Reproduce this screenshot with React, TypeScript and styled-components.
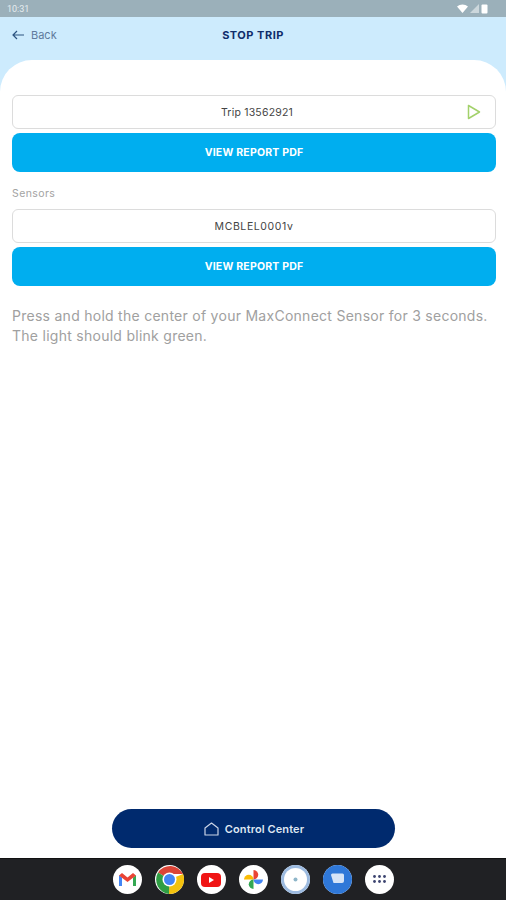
import React from "react";
import styled, { createGlobalStyle } from "styled-components";

const GlobalStyle = createGlobalStyle`
  html, body {
    margin: 0;
    padding: 0;
    background: #cdebfd;
    font-family: "Inter", "Liberation Sans", sans-serif;
  }
  * {
    box-sizing: border-box;
  }
`;

const Screen = styled.div`
  width: 506px;
  height: 900px;
  display: flex;
  flex-direction: column;
  overflow: hidden;
  background: #cdebfd;
`;

const StatusBar = styled.div`
  height: 17px;
  flex-shrink: 0;
  background: #9bb0ba;
  display: flex;
  align-items: center;
  justify-content: space-between;
  padding: 0 18px 0 7px;
  color: #e6edf0;
  font-size: 9px;
  font-family: "Roboto", sans-serif;
`;

const StatusIcons = styled.div`
  display: flex;
  align-items: center;
  gap: 2px;
`;

const Header = styled.header`
  height: 43px;
  flex-shrink: 0;
  display: grid;
  grid-template-columns: 1fr auto 1fr;
  align-items: center;
  padding: 0 12px 8px;
`;

const BackLink = styled.div`
  display: flex;
  align-items: center;
  gap: 7px;
  color: #5f7a9c;
  font-size: 11px;
`;

const Title = styled.h1`
  margin: 0;
  font-size: 11px;
  font-weight: 700;
  letter-spacing: 0.5px;
  color: #0f2d6b;
`;

const Sheet = styled.main`
  flex: 1;
  min-height: 0;
  background: #ffffff;
  border-radius: 32px 32px 0 0;
  padding: 35px 10px 10px 12px;
  display: flex;
  flex-direction: column;
`;

const Field = styled.div<{ $shift?: number; $tracking?: number }>`
  position: relative;
  height: 34px;
  display: flex;
  align-items: center;
  justify-content: center;
  padding-left: ${(p) => p.$shift ?? 0}px;
  border: 1px solid #dcdcdc;
  border-radius: 6px;
  color: #444444;
  font-size: 10.5px;
  letter-spacing: ${(p) => p.$tracking ?? 0.2}px;
`;

const PlayIcon = styled.svg`
  position: absolute;
  right: 14px;
  top: 8px;
`;

const ReportButton = styled.button`
  height: 39px;
  margin-top: 4px;
  border: none;
  border-radius: 8px;
  background: #00aeef;
  color: #ffffff;
  font-family: inherit;
  font-size: 10.5px;
  font-weight: 700;
  letter-spacing: 0.2px;
`;

const SectionLabel = styled.div`
  margin: 15px 0 9px;
  height: 13px;
  line-height: 13px;
  color: #a3a3a3;
  font-size: 10.5px;
  letter-spacing: 0.4px;
`;

const Hint = styled.p`
  margin: 20px 0 0;
  color: #a0a0a0;
  font-size: 14px;
  line-height: 20px;
  letter-spacing: 0.27px;
  white-space: nowrap;
`;

const Spacer = styled.div`
  flex: 1;
`;

const ControlCenter = styled.button`
  align-self: center;
  width: 283px;
  height: 39px;
  margin-right: 2px;
  border: none;
  border-radius: 20px;
  background: #002a6e;
  color: #dfe6f2;
  font-family: inherit;
  font-size: 11px;
  font-weight: 600;
  letter-spacing: 0.1px;
  display: flex;
  align-items: center;
  justify-content: center;
  gap: 6px;
  padding-right: 4px;
`;

const Dock = styled.nav`
  height: 42px;
  flex-shrink: 0;
  background: #202124;
  border-top: 1px solid #111111;
  display: flex;
  align-items: center;
  justify-content: center;
  gap: 13px;
`;

const DockIcon = styled.div<{ $bg?: string }>`
  width: 29px;
  height: 29px;
  border-radius: 50%;
  background: ${(p) => p.$bg ?? "#ffffff"};
  display: flex;
  align-items: center;
  justify-content: center;
`;

const Gmail = () => (
  <svg width="19" height="15" viewBox="0 0 19 15">
    <path d="M1 14V3l3 2.500V14z" fill="#4285f4" />
    <path d="M15 14V5.500L18 3v11z" fill="#34a853" />
    <path d="M1 3.500 4 1l5.500 4.500L15 1l3 2.500-8.500 6.500z" fill="#ea4335" />
  </svg>
);

const Chrome = () => (
  <svg width="29" height="29" viewBox="0 0 29 29">
    <path d="M14.500 14.500 3 7.500A14.500 14.500 0 0 1 28 9H14.500z" fill="#db4437" />
    <path d="M14.500 14.500 28 9a14.500 14.500 0 0 1-14 20z" fill="#f4c20d" />
    <path d="M14.500 14.500 14 29A14.500 14.500 0 0 1 3 7.500z" fill="#2f9e44" />
    <circle cx="14.500" cy="14.500" r="7" fill="#ffffff" />
    <circle cx="14.500" cy="14.500" r="5.500" fill="#4285f4" />
  </svg>
);

const YouTube = () => (
  <svg width="20" height="14" viewBox="0 0 20 14">
    <rect width="20" height="14" rx="4" fill="#f01414" />
    <path d="M8 4v6l5-3z" fill="#ffffff" />
  </svg>
);

// Pinwheel: each petal is a half disc around the centre
const Photos = () => (
  <svg width="21" height="21" viewBox="0 0 21 21">
    <path d="M10.500 10.500H1a4.750 4.750 0 0 1 9.500 0z" fill="#fbbc04" />
    <path d="M10.500 10.500V1a4.750 4.750 0 0 1 0 9.500z" fill="#ea4335" />
    <path d="M10.500 10.500H20a4.750 4.750 0 0 1-9.500 0z" fill="#4285f4" />
    <path d="M10.500 10.500V20a4.750 4.750 0 0 1 0-9.500z" fill="#34a853" />
  </svg>
);

const Clock = () => (
  <svg width="29" height="29" viewBox="0 0 29 29">
    <circle cx="14.500" cy="14.500" r="14.500" fill="#9dbbe0" />
    <circle cx="14.500" cy="14.500" r="11.500" fill="#ffffff" />
    <circle cx="14.500" cy="14.500" r="2" fill="#8fb6c9" />
  </svg>
);

const Messages = () => (
  <svg width="29" height="29" viewBox="0 0 29 29">
    <circle cx="14.500" cy="14.500" r="14.500" fill="#2f78d8" />
    <path d="M8 10a1.500 1.500 0 0 1 1.500-1.500h10A1.500 1.500 0 0 1 21 10v6a2 2 0 0 1-2 2h-8.500z" fill="#d6e4f7" />
  </svg>
);

const AppGrid = () => (
  <svg width="13" height="9" viewBox="0 0 13 9" fill="#3c4470">
    {[1.500, 6.500, 11.500].flatMap((x) =>
      [1.500, 6.500].map((y) => <circle key={`${x}-${y}`} cx={x} cy={y} r="1.400" />)
    )}
  </svg>
);

export default function App() {
  return (
    <>
      <GlobalStyle />
      <Screen>
        <StatusBar>
          <span>10:31</span>
          <StatusIcons>
            <svg width="11" height="9" viewBox="0 0 11 9">
              <path d="M0 2.500a8.500 8.500 0 0 1 11 0L5.500 9z" fill="#ffffff" />
            </svg>
            <svg width="9" height="9" viewBox="0 0 9 9">
              <path d="M9 0v9H0z" fill="#ccd7dc" />
            </svg>
            <svg width="7" height="10" viewBox="0 0 7 10">
              <rect x="0.500" y="0.500" width="6" height="9" rx="1" fill="#ffffff" />
            </svg>
          </StatusIcons>
        </StatusBar>
        <Header>
          <BackLink>
            <svg width="12" height="10" viewBox="0 0 12 10" fill="none" stroke="#2d5480" strokeWidth="1.200">
              <path d="M12 5H1M5 1 1 5l4 4" />
            </svg>
            Back
          </BackLink>
          <Title>STOP TRIP</Title>
        </Header>
        <Sheet>
          <Field $shift={6}>
            Trip 13562921
            <PlayIcon width="14" height="16" viewBox="0 0 14 16" fill="none" stroke="#a3d16b" strokeWidth="1.500">
              <path d="M1.500 1.500v13l11-6.500z" strokeLinejoin="round" />
            </PlayIcon>
          </Field>
          <ReportButton>VIEW REPORT PDF</ReportButton>
          <SectionLabel>Sensors</SectionLabel>
          <Field $tracking={0.6}>MCBLEL0001v</Field>
          <ReportButton>VIEW REPORT PDF</ReportButton>
          <Hint>
            Press and hold the center of your MaxConnect Sensor for 3 seconds.
            <br />
            The light should blink green.
          </Hint>
          <Spacer />
          <ControlCenter>
            <svg width="15" height="14" viewBox="0 0 15 14" fill="none" stroke="#c9d3e6" strokeWidth="1.200">
              <path d="M1 13V6l6.500-5L14 6v7z" strokeLinejoin="round" />
            </svg>
            Control Center
          </ControlCenter>
        </Sheet>
        <Dock>
          <DockIcon><Gmail /></DockIcon>
          <DockIcon><Chrome /></DockIcon>
          <DockIcon><YouTube /></DockIcon>
          <DockIcon><Photos /></DockIcon>
          <DockIcon><Clock /></DockIcon>
          <DockIcon><Messages /></DockIcon>
          <DockIcon><AppGrid /></DockIcon>
        </Dock>
      </Screen>
    </>
  );
}
